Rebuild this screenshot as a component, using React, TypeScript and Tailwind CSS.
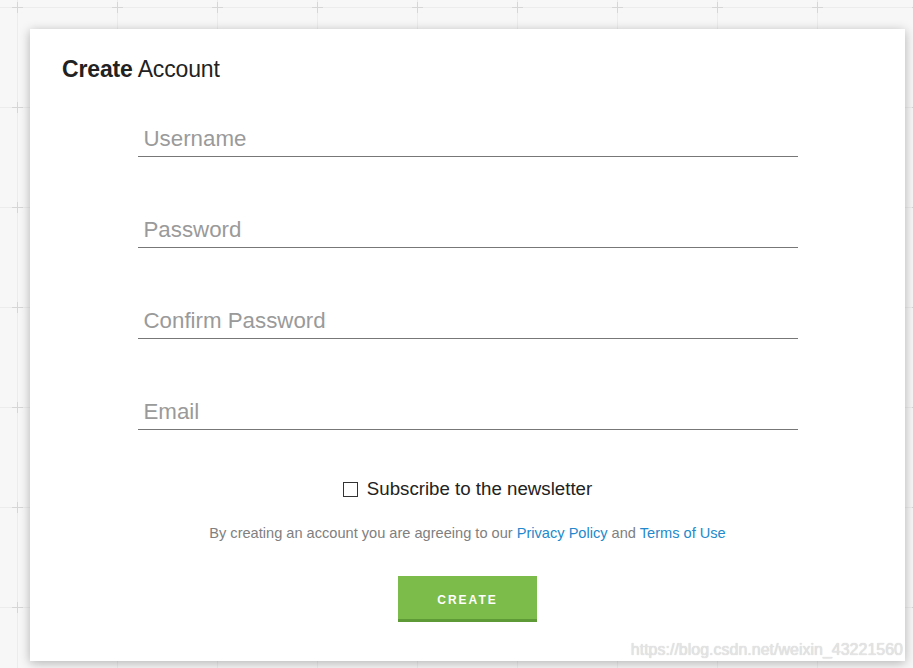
import { useState } from "react";

const fields = [
  { name: "username", placeholder: "Username", type: "text" },
  { name: "password", placeholder: "Password", type: "password" },
  { name: "confirm", placeholder: "Confirm Password", type: "password" },
  { name: "email", placeholder: "Email", type: "email" },
];

function GridBackdrop() {
  return (
    <svg className="absolute inset-0 h-full w-full" aria-hidden="true">
      <defs>
        <pattern id="grid" width="100" height="100" patternUnits="userSpaceOnUse">
          <path d="M17.5 0V100M0 7.5H100" stroke="#ececec" strokeWidth="1" fill="none" />
          <path d="M12 7.5H23M17.5 2V13" stroke="#d6d6d6" strokeWidth="1" fill="none" />
        </pattern>
      </defs>
      <rect width="100%" height="100%" fill="#f7f7f7" />
      <rect width="100%" height="100%" fill="url(#grid)" />
    </svg>
  );
}

export default function App() {
  const [subscribed, setSubscribed] = useState(false);

  return (
    <div
      className="relative h-screen w-full overflow-hidden"
      style={{ fontFamily: '"Liberation Sans", Arial, sans-serif' }}
    >
      <GridBackdrop />

      {/* Card */}
      <div className="relative ml-[30px] mt-[29px] h-[632px] w-[875px] bg-white pt-[29px] shadow-[0_2px_10px_rgba(0,0,0,0.28)]">
        <h1 className="px-[32px] text-[23px] leading-[22px] tracking-[-0.15px] text-[#222]">
          <span className="font-bold">Create</span> Account
        </h1>

        <form className="mt-[41px] flex flex-col items-center" onSubmit={(e) => e.preventDefault()}>
          <div className="flex flex-col gap-[55px]">
            {fields.map((f) => (
              <input
                key={f.name}
                name={f.name}
                type={f.type}
                placeholder={f.placeholder}
                className="h-[36px] w-[660px] border-b border-[#777] bg-transparent px-[6px] text-[22.3px] text-[#333] outline-none placeholder:text-[#9a9a9a]"
              />
            ))}
          </div>

          <label className="mt-[49px] flex h-[20px] cursor-pointer items-center gap-[9px] text-[18.7px] leading-[20px] text-[#222]">
            <span
              className={`h-[15px] w-[15px] border border-[#333] ${subscribed ? "bg-[#333]" : "bg-white"}`}
              onClick={() => setSubscribed(!subscribed)}
            />
            Subscribe to the newsletter
          </label>

          <p className="mt-[24px] text-[14.6px] leading-[20px] text-[#808080]">
            By creating an account you are agreeing to our{" "}
            <a href="#" className="text-[#2389cc]">Privacy Policy</a> and{" "}
            <a href="#" className="text-[#2389cc]">Terms of Use</a>
          </p>

          <button
            type="submit"
            className="mt-[33px] flex h-[46px] w-[139px] items-center justify-center border-b-[3px] border-[#5e9a35] bg-[#7cbc4b] pt-[5px] text-[12px] font-bold tracking-[2px] text-white"
          >
            CREATE
          </button>
        </form>
      </div>

      {/* Watermark */}
      <div className="absolute right-[10px] top-[640px] text-[16px] leading-[20px] text-[#e4e4e4] [text-shadow:0_0_1px_#c8c8c8]">
        https://blog.csdn.net/weixin_43221560
      </div>
    </div>
  );
}
